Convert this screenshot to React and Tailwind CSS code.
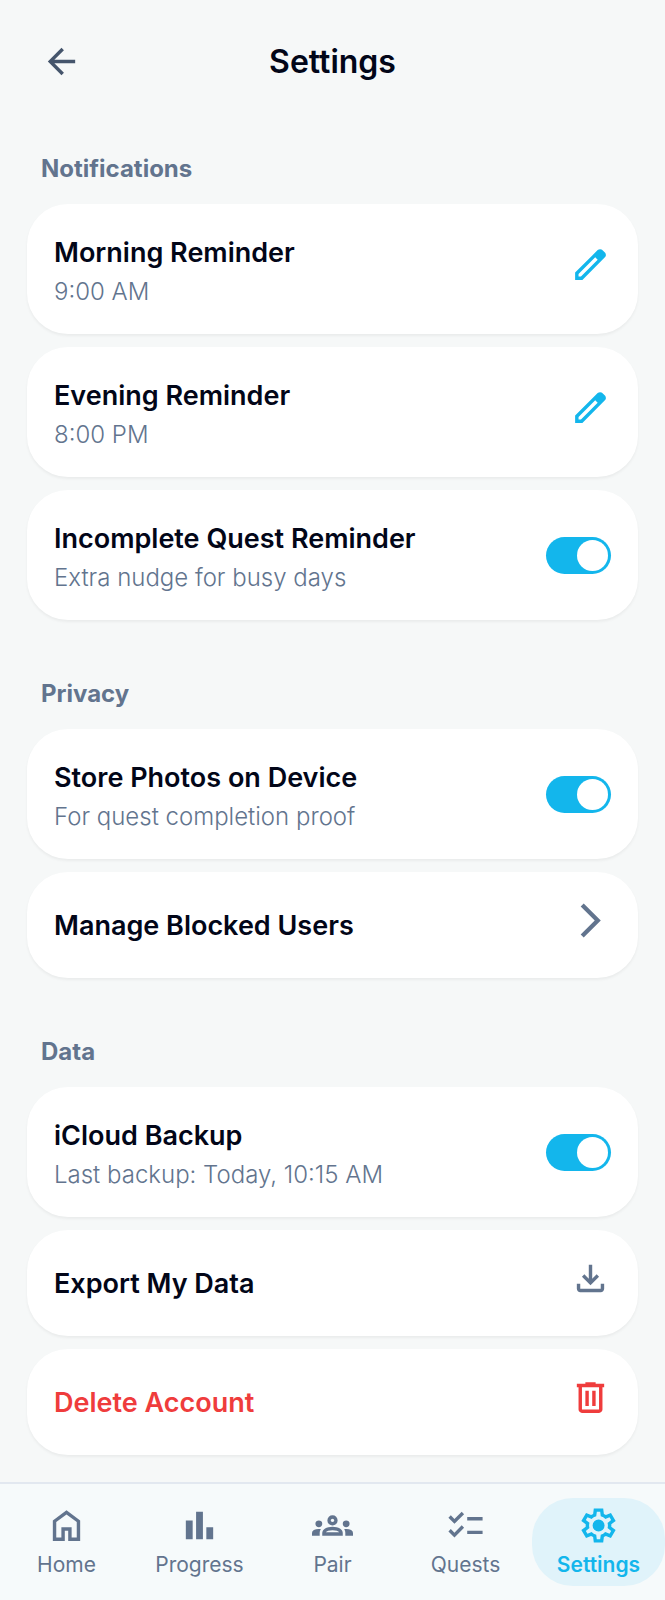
import { useState } from "react";

const ICONS = {
  back: "m313-440 224 224-57 56-320-320 320-320 57 56-224 224h487v80H313Z",
  edit: "M200-200h57l391-391-57-57-391 391v57Zm-80 80v-170l528-527q12-11 26.5-17t30.5-6q16 0 31 6t26 18l55 56q12 11 17.5 26t5.5 30q0 16-5.5 30.5T817-647L290-120H120Z",
  chevron: "m321-80-71-71 329-329-329-329 71-71 400 400L321-80Z",
  download:
    "M480-320 280-520l56-58 104 104v-326h80v326l104-104 56 58-200 200ZM240-160q-33 0-56.5-23.5T160-240v-120h80v120h480v-120h80v120q0 33-23.5 56.5T720-160H240Z",
  trash:
    "M280-120q-33 0-56.5-23.5T200-200v-520h-40v-80h200v-40h240v40h200v80h-40v520q0 33-23.5 56.5T680-120H280Zm400-600H280v520h400v-520ZM360-280h80v-360h-80v360Zm160 0h80v-360h-80v360Z",
  home: "M240-200h120v-240h240v240h120v-360L480-740 240-560v360Zm-80 80v-480l320-240 320 240v480H520v-240h-80v240H160Z",
  bars: "M640-160v-280h160v280H640Zm-240 0v-640h160v640H400Zm-240 0v-440h160v440H160Z",
  groups:
    "M0-240v-63q0-43 44-70t116-27q13 0 25 .5t23 2.5q-14 21-21 44t-7 48v65H0Zm240 0v-65q0-32 17.5-58.5T307-410q32-20 76.5-30t96.5-10q53 0 97.5 10t76.5 30q32 20 49 46.5t17 58.5v65H240Zm540 0v-65q0-26-6.5-49T754-397q11-2 22.5-2.5t23.5-.5q72 0 116 26.5t44 70.5v63H780Zm-455-80h311q-10-20-55.5-35T480-370q-55 0-100.5 15T325-320ZM160-440q-33 0-56.5-23.5T80-520q0-34 23.5-57t56.5-23q34 0 57 23t23 57q0 33-23 56.5T160-440Zm640 0q-33 0-56.5-23.5T720-520q0-34 23.5-57t56.5-23q34 0 57 23t23 57q0 33-23 56.5T800-440Zm-320-40q-50 0-85-35t-35-85q0-51 35-85.5t85-34.5q51 0 85.5 34.5T600-600q0 50-34.5 85T480-480Zm0-80q17 0 28.5-11.5T520-600q0-17-11.5-28.5T480-640q-17 0-28.5 11.5T440-600q0 17 11.5 28.5T480-560Z",
  checklist:
    "M222-200 80-342l56-56 85 85 170-170 56 57-225 226Zm0-320L80-662l56-56 85 85 170-170 56 57-225 226Zm298 240v-80h360v80H520Zm0-320v-80h360v80H520Z",
  gear: "m370-80-16-128q-13-5-24.5-12T307-235l-119 50L78-375l103-78q-1-7-1-13.5v-27q0-6.5 1-13.5L78-585l110-190 119 50q11-8 23-15t24-12l16-128h220l16 128q13 5 24.5 12t22.5 15l119-50 110 190-103 78q1 7 1 13.5v27q0 6.5-2 13.5l103 78-110 190-118-50q-11 8-23 15t-24 12L590-80H370Zm70-80h79l14-106q31-8 57.5-23.5T639-327l99 41 39-68-86-65q5-14 7-29.5t2-31.5q0-16-2-31.5t-7-29.5l86-65-39-68-99 42q-22-23-48.5-38.5T533-694l-13-106h-79l-14 106q-31 8-57.5 23.5T321-633l-99-41-39 68 86 64q-5 15-7 30t-2 32q0 16 2 31t7 30l-86 65 39 68 99-42q22 23 48.5 38.5T427-266l13 106Zm42-180q58 0 99-41t41-99q0-58-41-99t-99-41q-59 0-99.5 41T342-480q0 58 40.5 99t99.5 41Z",
};

function Icon({ name }) {
  return (
    <svg viewBox="0 -960 960 960" fill="currentColor" aria-hidden="true" className="block size-[41px]">
      <path d={ICONS[name]} />
    </svg>
  );
}

const CARD =
  "flex w-full items-center justify-between rounded-[41px] bg-white px-[27px] text-left shadow-[0_2px_3px_rgba(0,0,0,0.05)]";

function Label({ title, detail }) {
  return (
    <span className={detail ? "block pt-[3px]" : "block"}>
      <span className="block text-[27px] leading-[41px] font-semibold">{title}</span>
      {detail && <span className="mt-px block text-2xl leading-[35px] font-light text-slate-500">{detail}</span>}
    </span>
  );
}

function EditRow({ title, detail }) {
  return (
    <div className={`${CARD} h-[130px]`}>
      <Label title={title} detail={detail} />
      <button type="button" aria-label={`Edit ${title}`} className="pb-2.5 text-[#13b6ec]">
        <Icon name="edit" />
      </button>
    </div>
  );
}

function ToggleRow({ title, detail }) {
  const [on, setOn] = useState(true);
  return (
    <label className={`${CARD} h-[130px] cursor-pointer`}>
      <Label title={title} detail={detail} />
      <input
        type="checkbox"
        role="switch"
        checked={on}
        onChange={(e) => setOn(e.target.checked)}
        className="flex h-[37px] w-[65px] shrink-0 cursor-pointer appearance-none items-center justify-start rounded-full bg-slate-300 px-[3px] before:size-[31px] before:rounded-full before:bg-white before:content-[''] checked:justify-end checked:bg-[#13b6ec]"
      />
    </label>
  );
}

function ActionRow({ title, icon, danger }) {
  return (
    <button type="button" className={`${CARD} h-[106px] ${danger ? "text-[#ef3c3c]" : ""}`}>
      <Label title={title} />
      <span className={`pb-2.5 ${danger ? "" : "text-slate-500"}`}>
        <Icon name={icon} />
      </span>
    </button>
  );
}

function Section({ title, children }) {
  return (
    <section>
      <h2 className="mb-4 px-3.5 text-2xl leading-[39px] font-bold text-slate-500">{title}</h2>
      <div className="flex flex-col gap-[13px]">{children}</div>
    </section>
  );
}

const TABS = [
  { label: "Home", icon: "home" },
  { label: "Progress", icon: "bars" },
  { label: "Pair", icon: "groups" },
  { label: "Quests", icon: "checklist" },
  { label: "Settings", icon: "gear", active: true },
];

export default function App() {
  return (
    <div className="flex min-h-screen flex-col bg-[#f6f8f8] font-['Inter',sans-serif] text-slate-950">
      <header className="grid h-[122px] grid-cols-[41px_1fr_41px] items-center px-[41px]">
        <button type="button" aria-label="Back" className="text-slate-600">
          <Icon name="back" />
        </button>
        <h1 className="text-center text-[32px] leading-[41px] font-semibold">Settings</h1>
      </header>

      <main className="flex flex-1 flex-col gap-[54px] p-[27px]">
        <Section title="Notifications">
          <EditRow title="Morning Reminder" detail="9:00 AM" />
          <EditRow title="Evening Reminder" detail="8:00 PM" />
          <ToggleRow title="Incomplete Quest Reminder" detail="Extra nudge for busy days" />
        </Section>
        <Section title="Privacy">
          <ToggleRow title="Store Photos on Device" detail="For quest completion proof" />
          <ActionRow title="Manage Blocked Users" icon="chevron" />
        </Section>
        <Section title="Data">
          <ToggleRow title="iCloud Backup" detail="Last backup: Today, 10:15 AM" />
          <ActionRow title="Export My Data" icon="download" />
          <ActionRow title="Delete Account" icon="trash" danger />
        </Section>
      </main>

      <nav className="sticky bottom-0 grid grid-cols-5 border-t-2 border-slate-200 bg-[#f6fafb] py-3.5">
        {TABS.map(({ label, icon, active }) => (
          <a
            key={label}
            href="#"
            aria-current={active ? "page" : undefined}
            className={`flex h-[88px] flex-col items-center gap-[7px] rounded-[41px] pt-[7px] text-[21px] leading-6 ${
              active ? "bg-[#e0f3fa] font-semibold text-[#13b6ec]" : "font-normal text-slate-500"
            }`}
          >
            <Icon name={icon} />
            {label}
          </a>
        ))}
      </nav>
    </div>
  );
}
